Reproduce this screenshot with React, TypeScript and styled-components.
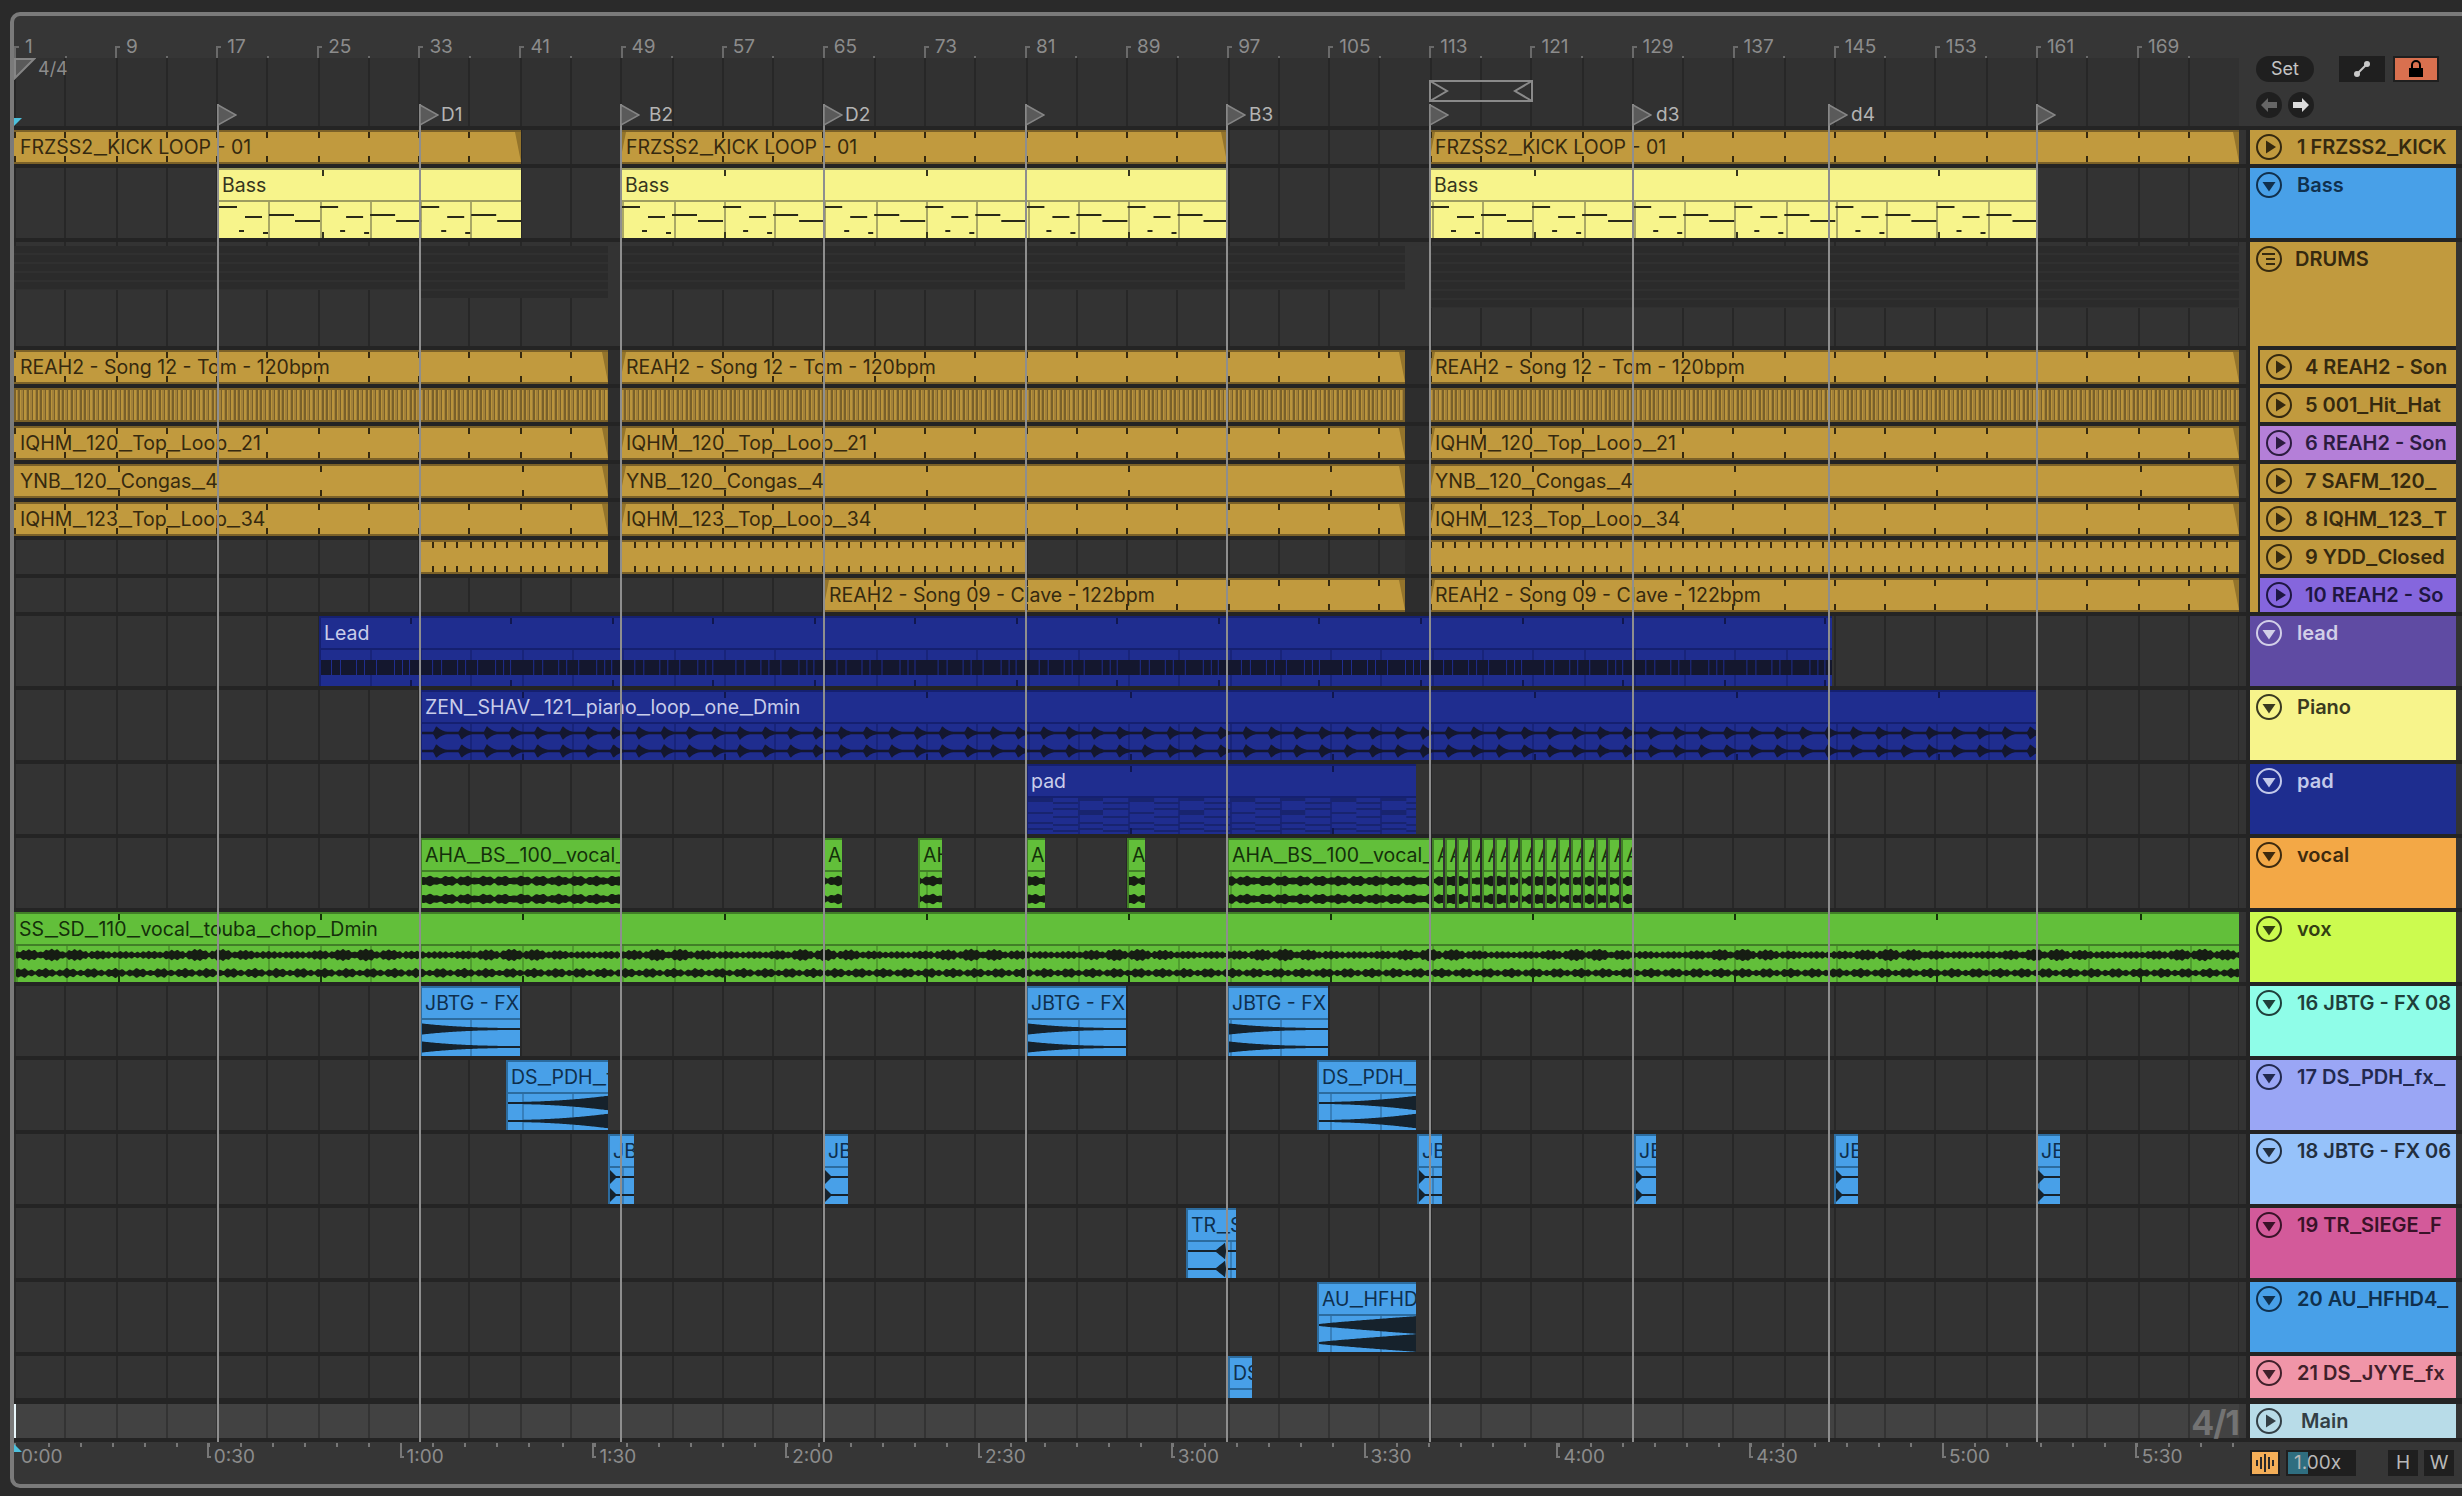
import React from 'react';
import styled, { createGlobalStyle } from 'styled-components';

const ORIGIN = 14;
const BEAT = 50.55;
const LANE_WIDTH = 2225;

type Tone = 'gold' | 'yellow' | 'navy' | 'green' | 'blue';
type Kind = 'plain' | 'hatch' | 'notes' | 'lead' | 'pluck' | 'pad' | 'vocal' | 'vox' | 'decay' | 'swell' | 'hit' | 'rise' | 'big';

interface ClipData {
  x: number;
  end: number;
  label?: string;
  tick?: [number, number];
  kind?: Kind;
}

interface LaneData {
  height: number;
  tone: Tone;
  clips: ClipData[];
  dim?: [number, number][];
}

const TONES = {
  gold: { bg: '#c19a3e', edge: '#7b6128', text: '#35290f', tick: '#35290f', sep: '#a5843a', wave: '#7a5f27' },
  yellow: { bg: '#f7f48b', edge: '#9d9c60', text: '#35351e', tick: '#35351e', sep: '#a9a765', wave: '#2a2a18' },
  navy: { bg: '#1f2d8f', edge: '#152070', text: '#c9cdea', tick: '#10174f', sep: '#18247a', wave: '#14172e' },
  green: { bg: '#62bf3a', edge: '#417f27', text: '#14300a', tick: '#14300a', sep: '#4f9c2e', wave: '#161d13' },
  blue: { bg: '#48a0e8', edge: '#2c6c9f', text: '#0e2f4d', tick: '#0e2f4d', sep: '#377fbb', wave: '#16222c' },
};

const snap = (x: number) => 2 * Math.round(x / 2);

// one gradient with hard stops, so fractional spacing does not drift along the long lanes
const hardStops = (positions: number[], color: string, line = 2) => {
  const stops = positions
    .map((p) => `transparent ${p}px, ${color} ${p}px, ${color} ${p + line}px, transparent ${p + line}px`)
    .join(', ');
  return `linear-gradient(90deg, ${stops})`;
};

const steps = (from: number, to: number, period: number, start: number) => {
  const result: number[] = [];
  let k = Math.ceil((from - start) / period);
  while (start + k * period < to) {
    result.push(snap(start + k * period) - from);
    k += 1;
  }
  return result.filter((p) => p >= 0 && p < to - from - 1);
};

const gridLines = steps(ORIGIN, ORIGIN + LANE_WIDTH, BEAT, ORIGIN);
const LANE_GRID = hardStops(gridLines, '#272727');
const MAIN_GRID = hardStops(gridLines, '#333333');
const TIME_TICKS = hardStops(steps(0, 2225, 32.13, 33), '#777777');

const gold = (x: number, end: number, label?: string, tick: [number, number] = [BEAT, ORIGIN]): ClipData => ({ x, end, label, tick });

const triple = (label: string, tick?: [number, number]) => [gold(14, 608, label, tick), gold(620, 1405, label, tick), gold(1429, 2239, label, tick)];

const stutters: ClipData[] = Array.from({ length: 16 }, (_, i) => ({
  x: 1432 + i * 12.6,
  end: 1432 + i * 12.6 + 10.6,
  label: 'A',
  kind: 'vocal' as Kind,
}));

const clip = (x: number, end: number, label: string, kind: Kind, tick?: [number, number]): ClipData => ({ x, end, label, kind, tick });

const LANES_TOP: LaneData[] = [
  { height: 34, tone: 'gold', clips: [gold(14, 521, 'FRZSS2_KICK LOOP - 01'), gold(620, 1227, 'FRZSS2_KICK LOOP - 01'), gold(1429, 2239, 'FRZSS2_KICK LOOP - 01')] },
  {
    height: 70,
    tone: 'yellow',
    clips: [
      clip(217, 521, 'Bass', 'notes', [202.2, 319]),
      clip(620, 1227, 'Bass', 'notes', [202.2, 722]),
      clip(1429, 2037, 'Bass', 'notes', [202.2, 1531]),
    ],
  },
];

const LANES_DRUMS: LaneData[] = [
  { height: 34, tone: 'gold', clips: triple('REAH2 - Song 12 - Tom - 120bpm'), dim: [[608, 620], [1405, 1429]] },
  { height: 34, tone: 'gold', clips: [14, 620, 1429].map((x, i) => ({ x, end: [608, 1405, 2239][i], kind: 'hatch' as Kind })), dim: [[608, 620], [1405, 1429]] },
  { height: 34, tone: 'gold', clips: triple('IQHM_120_Top_Loop_21'), dim: [[608, 620], [1405, 1429]] },
  { height: 34, tone: 'gold', clips: triple('YNB_120_Congas_4', [202.2, 117]), dim: [[608, 620], [1405, 1429]] },
  { height: 34, tone: 'gold', clips: triple('IQHM_123_Top_Loop_34'), dim: [[608, 620], [1405, 1429]] },
  {
    height: 34,
    tone: 'gold',
    clips: [gold(420, 608, undefined, [12.64, ORIGIN]), gold(620, 1026, undefined, [12.64, ORIGIN]), gold(1429, 2239, undefined, [12.64, ORIGIN])],
    dim: [[608, 620], [1405, 1429]],
  },
  { height: 34, tone: 'gold', clips: [gold(823, 1405, 'REAH2 - Song 09 - Clave - 122bpm'), gold(1429, 2239, 'REAH2 - Song 09 - Clave - 122bpm')], dim: [[1405, 1429]] },
];

const LANES_BOTTOM: LaneData[] = [
  { height: 70, tone: 'navy', clips: [clip(319, 1832, 'Lead', 'lead', [101.1, 407])] },
  { height: 70, tone: 'navy', clips: [clip(420, 2037, 'ZEN_SHAV_121_piano_loop_one_Dmin', 'pluck', [202.2, 1127])] },
  { height: 70, tone: 'navy', clips: [clip(1026, 1416, 'pad', 'pad', [202.2, 1127])] },
  {
    height: 70,
    tone: 'green',
    clips: [
      clip(420, 620, 'AHA_BS_100_vocal_', 'vocal'),
      clip(823, 842, 'A', 'vocal'),
      clip(918, 942, 'AHA', 'vocal'),
      clip(1026, 1045, 'A', 'vocal'),
      clip(1127, 1145, 'A', 'vocal'),
      clip(1227, 1429, 'AHA_BS_100_vocal_', 'vocal'),
      ...stutters,
    ],
  },
  { height: 70, tone: 'green', clips: [clip(14, 2239, 'SS_SD_110_vocal_touba_chop_Dmin', 'vox', [202.2, 115])] },
  { height: 70, tone: 'blue', clips: [clip(420, 520, 'JBTG - FX', 'decay'), clip(1026, 1126, 'JBTG - FX', 'decay'), clip(1227, 1328, 'JBTG - FX', 'decay')] },
  { height: 70, tone: 'blue', clips: [clip(506, 608, 'DS_PDH_fx', 'swell'), clip(1317, 1416, 'DS_PDH_fx', 'swell')] },
  {
    height: 70,
    tone: 'blue',
    clips: [
      clip(608, 634, 'JBTG', 'hit'),
      clip(823, 848, 'JBTG', 'hit'),
      clip(1417, 1442, 'JBTG', 'hit'),
      clip(1634, 1656, 'JBTG', 'hit'),
      clip(1834, 1858, 'JBTG', 'hit'),
      clip(2036, 2060, 'JBTG', 'hit'),
    ],
  },
  { height: 70, tone: 'blue', clips: [clip(1186, 1236, 'TR_SIEGE', 'rise')] },
  { height: 70, tone: 'blue', clips: [clip(1317, 1416, 'AU_HFHD4', 'big')] },
  { height: 42, tone: 'blue', clips: [clip(1228, 1252, 'DS_JYYE', 'plain')] },
];

const LOCATORS: { x: number; label?: string; offset?: number }[] = [
  { x: 218 },
  { x: 420, label: 'D1', offset: 22 },
  { x: 621, label: 'B2', offset: 29 },
  { x: 824, label: 'D2', offset: 22 },
  { x: 1026 },
  { x: 1227, label: 'B3', offset: 23 },
  { x: 1430 },
  { x: 1633, label: 'd3', offset: 24 },
  { x: 1829, label: 'd4', offset: 23 },
  { x: 2037 },
];

const BAR_NUMBERS = Array.from({ length: 22 }, (_, i) => i * 8 + 1);
const TIMES = ['0:00', '0:30', '1:00', '1:30', '2:00', '2:30', '3:00', '3:30', '4:00', '4:30', '5:00', '5:30'];

type IconName = 'play' | 'down' | 'group';

interface TrackData {
  label: string;
  bg: string;
  fg: string;
  icon: IconName;
  height: number;
}

const DK = '#35290f';

const TRACKS_TOP: TrackData[] = [
  { label: '1 FRZSS2_KICK', bg: '#c19a3e', fg: DK, icon: 'play', height: 34 },
  { label: 'Bass', bg: '#48a0e8', fg: '#10304d', icon: 'down', height: 70 },
];

const TRACKS_NESTED: TrackData[] = [
  { label: '4 REAH2 - Son', bg: '#c19a3e', fg: DK, icon: 'play', height: 34 },
  { label: '5 001_Hit_Hat', bg: '#c19a3e', fg: DK, icon: 'play', height: 34 },
  { label: '6 REAH2 - Son', bg: '#b47fd8', fg: '#2c1c40', icon: 'play', height: 34 },
  { label: '7 SAFM_120_', bg: '#c19a3e', fg: DK, icon: 'play', height: 34 },
  { label: '8 IQHM_123_T', bg: '#c19a3e', fg: DK, icon: 'play', height: 34 },
  { label: '9 YDD_Closed', bg: '#c19a3e', fg: DK, icon: 'play', height: 34 },
  { label: '10 REAH2 - So', bg: '#8566dd', fg: '#1e1642', icon: 'play', height: 34 },
];

const TRACKS_BOTTOM: TrackData[] = [
  { label: 'lead', bg: '#5f4ba3', fg: '#d2cfe8', icon: 'down', height: 70 },
  { label: 'Piano', bg: '#f7f48b', fg: '#3a3a20', icon: 'down', height: 70 },
  { label: 'pad', bg: '#1e2d8f', fg: '#c3c9ea', icon: 'down', height: 70 },
  { label: 'vocal', bg: '#f3a846', fg: '#3e2a0e', icon: 'down', height: 70 },
  { label: 'vox', bg: '#ccfb4f', fg: '#333f12', icon: 'down', height: 70 },
  { label: '16 JBTG - FX 08', bg: '#8ffde8', fg: '#1f3f3a', icon: 'down', height: 70 },
  { label: '17 DS_PDH_fx_', bg: '#9aa6f5', fg: '#22294f', icon: 'down', height: 70 },
  { label: '18 JBTG - FX 06', bg: '#96c2fa', fg: '#232f3f', icon: 'down', height: 70 },
  { label: '19 TR_SIEGE_F', bg: '#d35a9a', fg: '#391228', icon: 'down', height: 70 },
  { label: '20 AU_HFHD4_', bg: '#48a0e8', fg: '#10304d', icon: 'down', height: 70 },
  { label: '21 DS_JYYE_fx', bg: '#f095a8', fg: '#40202a', icon: 'down', height: 42 },
];

const GlobalStyle = createGlobalStyle`
  html, body {
    background: #2a2a2a;
    margin: 0;
    overflow: hidden;
  }
`;

const Page = styled.div`
  background: #2a2a2a;
  box-sizing: border-box;
  color: #8c8c8c;
  font-family: Inter, 'Liberation Sans', sans-serif;
  height: 1496px;
  overflow: hidden;
  padding: 12px 0 0 10px;
  width: 2462px;
`;

const Frame = styled.div`
  background: #363636;
  border: 4px solid #7a7a7a;
  border-radius: 10px 0 0 10px;
  border-right: 0;
  box-sizing: border-box;
  display: grid;
  grid-template-columns: 2232px 216px;
  height: 1476px;
  overflow: hidden;
`;

const Timeline = styled.div`
  display: flex;
  flex-direction: column;
  position: relative;
`;

const TopRuler = styled.div`
  display: flex;
  flex: none;
  height: 42px;
  width: 2226px;
`;

const BarCell = styled.div`
  box-sizing: border-box;
  flex: none;
  font-size: 19px;
  line-height: 22px;
  padding: 20px 0 0 11px;
  position: relative;
  width: 101.1px;

  &::before {
    border-left: 2px solid #6a6a6a;
    border-top: 2px solid #6a6a6a;
    bottom: 0;
    content: '';
    height: 10px;
    left: 0;
    position: absolute;
    width: 3px;
  }

  &::after {
    background: #6a6a6a;
    bottom: 0;
    content: '';
    height: 2px;
    left: 50%;
    position: absolute;
    width: 2px;
  }
`;

const MarkerLane = styled.div`
  background-color: #313131;
  background-image: ${LANE_GRID};
  flex: none;
  height: 68px;
  margin-right: 7px;
  position: relative;
`;

const Signature = styled.span`
  font-size: 18px;
  left: 24px;
  line-height: 22px;
  position: absolute;
  top: 0;
`;

const SignatureFlag = styled.svg`
  left: 0;
  position: absolute;
  top: 0;
`;

const LoopBrace = styled.svg`
  left: 1415px;
  position: absolute;
  top: 22px;
`;

const StartMark = styled.div`
  background: #4cc0dc;
  clip-path: polygon(0 0, 100% 0, 0 100%);
  height: 8px;
  left: 0;
  position: absolute;
  top: 60px;
  width: 8px;
`;

const LaneStack = styled.div`
  background: #242424;
  display: flex;
  flex: 1;
  flex-direction: column;
  gap: 4px;
  padding: 4px 0;
`;

const LaneRow = styled.div<{ $height: number }>`
  background-color: #333333;
  background-image: ${LANE_GRID};
  border-right: 7px solid #333333;
  box-shadow: inset -1px 0 0 #272727;
  flex: none;
  height: ${(p) => p.$height}px;
  position: relative;
`;

const DimBand = styled.div`
  background: #2d2d2d;
  bottom: 0;
  position: absolute;
  top: 0;
`;

const GhostBand = styled.div<{ $height: number }>`
  background: repeating-linear-gradient(180deg, #2b2b2b 0 7px, #303030 7px 9px);
  height: ${(p) => p.$height}px;
  position: absolute;
  top: 4px;
`;

const ClipBox = styled.div<{ $tone: Tone; $short: boolean; $ticks: boolean }>`
  background: ${(p) => TONES[p.$tone].bg};
  border-left: ${(p) => (p.$short ? 0 : 2)}px solid ${(p) => TONES[p.$tone].edge};
  border-bottom: ${(p) => (p.$short ? 2 : 0)}px solid ${(p) => TONES[p.$tone].edge};
  border-top: 2px solid ${(p) => TONES[p.$tone].edge};
  bottom: 0;
  box-sizing: border-box;
  color: ${(p) => TONES[p.$tone].text};
  display: flex;
  flex-direction: column;
  overflow: hidden;
  position: absolute;
  top: 0;

  &::before {
    background: ${(p) => (p.$ticks ? 'var(--ticks) left top/100% 6px no-repeat, var(--ticks) left bottom/100% 6px no-repeat' : 'none')};
    content: '';
    inset: 0;
    pointer-events: none;
    position: absolute;
    z-index: 2;
  }
`;

const ClipTitle = styled.div<{ $tone: Tone; $short: boolean }>`
  --under-margin: 2.5px;
  --under-scale: 1.5;
  align-items: center;
  border-bottom: ${(p) => (p.$short ? 0 : 2)}px solid ${(p) => TONES[p.$tone].edge};
  box-sizing: border-box;
  display: flex;
  flex: none;
  font-size: 19.5px;
  height: ${(p) => (p.$short ? '100%' : '32px')};
  padding-left: ${(p) => (p.$short ? 6 : 3)}px;
  white-space: pre;
`;

const Under = styled.span`
  display: inline-block;
  margin: 0 var(--under-margin);
  transform: scaleX(var(--under-scale));
`;

const ClipBody = styled.div`
  background-image: var(--seps);
  background-repeat: no-repeat;
  flex: 1;
  min-height: 0;
  position: relative;
`;

const HatchBody = styled.div`
  background: repeating-linear-gradient(90deg, #79602a 0 1.6px, #ba943c 1.6px 3px, #a3813a 3px 4.4px);
  flex: 1;
`;

const Fade = styled.div<{ $side: 'left' | 'right' }>`
  background: rgba(80, 60, 15, 0.4);
  clip-path: ${(p) => (p.$side === 'right' ? 'polygon(0 0, 100% 0, 100% 100%)' : 'polygon(0 0, 100% 0, 0 100%)')};
  bottom: 0;
  ${(p) => p.$side}: 0;
  position: absolute;
  top: 0;
  width: 6px;
`;

const MainLane = styled.div`
  background-color: #424242;
  background-image: ${MAIN_GRID};
  border-right: 7px solid #3a3a3a;
  flex: none;
  height: 34px;
  margin-top: 2px;
  position: relative;

  &::before {
    background: #e8f6fa;
    bottom: 0;
    content: '';
    left: 0;
    position: absolute;
    top: 0;
    width: 2px;
  }
`;

const GridValue = styled.span`
  color: #737373;
  font-size: 34px;
  font-weight: 700;
  letter-spacing: -1px;
  line-height: 34px;
  position: absolute;
  right: 0;
  top: 2px;
`;

const TimeRuler = styled.div`
  background-image: ${TIME_TICKS};
  background-position: left 1px;
  background-repeat: no-repeat;
  background-size: 100% 4px;
  display: flex;
  flex: none;
  height: 42px;
  position: relative;
`;

const TimeCell = styled.div<{ $first: boolean }>`
  box-sizing: border-box;
  flex: none;
  font-size: 19px;
  line-height: 30px;
  padding-left: 7px;
  position: relative;
  width: 192.8px;

  &::before {
    border-bottom: 2px solid #777777;
    border-left: 2px solid #777777;
    content: '';
    display: ${(p) => (p.$first ? 'none' : 'block')};
    height: 13px;
    left: 0;
    position: absolute;
    top: 1px;
    width: 2px;
  }
`;

const StartFlag = styled.div`
  background: #4cc0dc;
  clip-path: polygon(0 0, 100% 100%, 0 100%);
  height: 8px;
  left: 0;
  position: absolute;
  top: 2px;
  width: 8px;
`;

const Locator = styled.div`
  background: #8e8e8e;
  bottom: 42px;
  pointer-events: none;
  position: absolute;
  top: 88px;
  width: 2px;
  z-index: 5;
`;

const LocatorFlag = styled.svg`
  left: 0;
  position: absolute;
  top: 0;
`;

const LocatorLabel = styled.span`
  color: #b4b4b4;
  font-size: 19px;
  left: var(--offset);
  line-height: 22px;
  position: absolute;
  top: 0;
`;

const Panel = styled.div`
  display: flex;
  flex-direction: column;
`;

const PanelTop = styled.div`
  box-sizing: border-box;
  display: flex;
  flex: none;
  flex-direction: column;
  gap: 10px;
  height: 110px;
  padding: 40px 0 0 10px;
`;

const ControlRow = styled.div`
  display: flex;
  gap: 6px;
`;

const SetButton = styled.div`
  background: #1f1f1f;
  border-radius: 13px;
  color: #c4c4c4;
  font-size: 18px;
  height: 26px;
  line-height: 26px;
  margin-right: 17px;
  text-align: center;
  width: 58px;
`;

const SquareButton = styled.div<{ $bg?: string }>`
  align-items: center;
  background: ${(p) => p.$bg || '#1f1f1f'};
  border: 2px solid #1f1f1f;
  box-sizing: border-box;
  display: flex;
  height: 26px;
  justify-content: center;
  margin-left: 2px;
  width: 46px;
`;

const RoundButton = styled.div`
  align-items: center;
  background: #1f1f1f;
  border-radius: 50%;
  display: flex;
  height: 26px;
  justify-content: center;
  width: 26px;
`;

const TrackStack = styled.div`
  background: #242424;
  display: flex;
  flex: 1;
  flex-direction: column;
  gap: 4px;
  padding: 4px 0;
`;

const TrackSlot = styled.div<{ $offset?: number }>`
  background: #333333;
  margin-left: 4px;
  margin-top: ${(p) => p.$offset || 0}px;
  padding-right: 6px;
`;

const Group = styled.div`
  background: #c19a3e;
  display: flex;
  flex-direction: column;
`;

const NestedList = styled.div`
  background: #242424;
  display: flex;
  flex-direction: column;
  gap: 4px;
  margin-left: 8px;
  padding: 4px 0 0 2px;
`;

const TrackHeader = styled.div<{ $bg: string; $fg: string; $height: number; $gap: number }>`
  --under-margin: 1px;
  --under-scale: 1.2;
  align-items: flex-start;
  background: ${(p) => p.$bg};
  box-sizing: border-box;
  color: ${(p) => p.$fg};
  display: flex;
  font-size: 20px;
  font-weight: 600;
  gap: ${(p) => p.$gap}px;
  height: ${(p) => p.$height}px;
  line-height: 26px;
  overflow: hidden;
  padding: 4px 0 0 6px;
  white-space: pre;
`;

const PanelBottom = styled.div`
  box-sizing: border-box;
  display: flex;
  flex: none;
  gap: 6px;
  height: 42px;
  padding: 8px 0 0 4px;
`;

const WaveButton = styled.div`
  align-items: center;
  background: #f3ae58;
  border: 2px solid #1f1f1f;
  box-sizing: border-box;
  display: flex;
  height: 26px;
  justify-content: center;
  width: 30px;
`;

const TempoBox = styled.div`
  background: linear-gradient(90deg, #2f6e80 20px, #1f1f1f 20px);
  background-clip: padding-box;
  border: 2px solid #1f1f1f;
  box-sizing: border-box;
  color: #b8b8b8;
  font-size: 19px;
  height: 26px;
  line-height: 22px;
  margin-right: 26px;
  padding-left: 6px;
  width: 70px;
`;

const KeyButton = styled.div`
  background: #1f1f1f;
  color: #b8b8b8;
  font-size: 19px;
  height: 26px;
  line-height: 26px;
  text-align: center;
  width: 30px;
`;

// the original UI face draws its underscores wider than Inter does
const Spaced: React.FC<{ text: string }> = ({ text }) => (
  <span>
    {text.split('_').map((part, i) => (
      <React.Fragment key={i}>
        {i > 0 && <Under>_</Under>}
        {part}
      </React.Fragment>
    ))}
  </span>
);

const TrackIcon: React.FC<{ name: IconName }> = ({ name }) => (
  <svg width="26" height="26" viewBox="0 0 26 26" style={{ flex: 'none' }}>
    <circle cx="13" cy="13" r="12" fill="none" stroke="currentColor" strokeWidth="2" />
    {name === 'play' && <polygon points="10,6.5 10,19.5 20,13" fill="currentColor" />}
    {name === 'down' && <polygon points="6.5,10 19.5,10 13,19.5" fill="currentColor" />}
    {name === 'group' && (
      <g stroke="currentColor" strokeWidth="2">
        <line x1="6" y1="8" x2="19" y2="8" />
        <line x1="10" y1="13" x2="19" y2="13" />
        <line x1="10" y1="18" x2="19" y2="18" />
      </g>
    )}
  </svg>
);

const channelPath = (width: number, mid: number, env: (x: number) => number) => {
  const upper: string[] = [];
  const lower: string[] = [];
  for (let x = 0; x <= width; x += 1) {
    const e = env(x);
    upper.push(`${x} ${(mid - e).toFixed(1)}`);
    lower.unshift(`${x} ${(mid + e).toFixed(1)}`);
  }
  return `M${upper.join('L')}L${lower.join('L')}Z`;
};

const NOTES: [number, number, number][] = [
  [0, 18, 4],
  [26, 43, 14],
  [50, 75, 12],
  [76, 101, 18],
  [20, 25, 28],
  [44, 49, 30],
];

const PAD_LINES: [number, number, number, number][] = [
  [0, 25, 0, 4],
  [0, 25, 14, 2],
  [0, 25, 24, 2],
  [0, 25, 30, 2],
  [25, 50, 4, 2],
  [25, 50, 10, 2],
  [25, 50, 18, 2],
  [25, 50, 26, 2],
  [25, 50, 32, 2],
  [50, 75, 0, 3],
  [50, 75, 12, 5],
  [50, 75, 24, 2],
  [50, 75, 30, 2],
  [75, 101, 4, 2],
  [75, 101, 10, 2],
  [75, 101, 18, 2],
  [75, 101, 26, 2],
  [75, 101, 32, 2],
];

const LEAD_GAPS = [10, 19, 35, 43, 55, 73, 81, 88];

const pluck = (x: number) => {
  const t = (x + 14) % 25.3;
  return t < 3 ? 1 + t * 2 : Math.max(1.2, 7 * Math.exp(-(t - 3) / 6));
};

const vocalEnv = (seed: number) => (x: number) =>
  2.6 + 2 * Math.abs(Math.sin((x + seed) * 0.17)) + 0.7 * Math.sin((x + seed) * 0.83);

const voxTop = (x: number) => 2.5 + 3 * Math.abs(Math.sin(x * 0.13)) * (0.6 + 0.4 * Math.sin(x * 0.041)) + 0.8 * Math.sin(x * 1.1);
const voxBottom = (x: number) => 3.2 + 0.9 * Math.sin(x * 0.9) + 0.9 * Math.sin(x * 0.27);

const WaveArt: React.FC<{ kind: Kind; width: number; x: number; color: string }> = ({ kind, width, x, color }) => {
  const w = Math.ceil(width);
  const count = Math.ceil(w / 101.1);
  const loops = Array.from({ length: count }, (_, i) => i * 101.1);
  let content: React.ReactNode = null;

  if (kind === 'notes') {
    content = loops.map((o) =>
      NOTES.map(([a, b, y]) => <rect key={`${o}-${a}`} x={o + a} y={y} width={b - a} height={2} fill={color} />),
    );
  } else if (kind === 'pad') {
    content = loops.map((o) =>
      PAD_LINES.map(([a, b, y, h]) => <rect key={`${o}-${a}-${y}`} x={o + a} y={y} width={b - a} height={h} fill="#18246f" />),
    );
  } else if (kind === 'lead') {
    content = (
      <>
        <rect x={0} y={10} width={w} height={15} fill={color} />
        {loops.map((o) => LEAD_GAPS.map((g) => <rect key={`${o}-${g}`} x={o + g} y={10} width={1} height={15} fill="#1f2d8f" />))}
      </>
    );
  } else {
    let top: (p: number) => number = () => 0;
    let bottom = top;
    if (kind === 'pluck') {
      top = pluck;
      bottom = pluck;
    } else if (kind === 'vocal') {
      top = vocalEnv(x * 0.4);
      bottom = vocalEnv(x * 0.4);
    } else if (kind === 'vox') {
      top = voxTop;
      bottom = voxBottom;
    } else if (kind === 'decay') {
      top = (p) => 1 + 4.5 * Math.pow(1 - p / w, 2.4);
      bottom = top;
    } else if (kind === 'swell') {
      top = (p) => 1 + 6.5 * Math.pow(p / w, 2);
      bottom = top;
    } else if (kind === 'big') {
      top = (p) => 1 + 8 * Math.pow(p / w, 0.9);
      bottom = top;
    } else if (kind === 'hit') {
      top = (p) => (p < 6 ? 7 - p : 1);
      bottom = top;
    } else if (kind === 'rise') {
      top = (p) => (p < 28 ? 1 : p < 38 ? 1 + ((p - 28) / 10) * 8 : 1);
      bottom = top;
    }
    if (kind === 'plain') return null;
    content = <path d={`${channelPath(w, 9, top)}${channelPath(w, 27, bottom)}`} fill={color} />;
  }

  return (
    <svg width={w} height={36} style={{ display: 'block', position: 'relative' }}>
      {content}
    </svg>
  );
};

const Clip: React.FC<{ data: ClipData; tone: Tone }> = ({ data, tone }) => {
  const width = data.end - data.x;
  const kind = data.kind;
  const short = !kind || kind === 'hatch';
  const colors = TONES[tone];
  const vars: Record<string, string> = {
    left: `${data.x - ORIGIN}px`,
    width: `${width}px`,
  };
  if (data.tick) {
    vars['--ticks'] = hardStops(steps(data.x, data.end, data.tick[0], data.tick[1]), colors.tick);
  }
  if (kind && kind !== 'hatch') {
    vars['--seps'] = hardStops(steps(data.x, data.end, BEAT, ORIGIN), colors.sep);
  }
  return (
    <ClipBox $tone={tone} $short={short} $ticks={Boolean(data.tick)} style={vars as React.CSSProperties}>
      {kind === 'hatch' && <HatchBody />}
      {data.label && (
        <ClipTitle $tone={tone} $short={short}>
          <Spaced text={data.label} />
        </ClipTitle>
      )}
      {kind && kind !== 'hatch' && (
        <ClipBody>
          <WaveArt kind={kind} width={width} x={data.x} color={colors.wave} />
        </ClipBody>
      )}
      {short && kind !== 'hatch' && data.label && (
        <>
          <Fade $side="right" />
          {data.x > 14 && <Fade $side="left" />}
        </>
      )}
    </ClipBox>
  );
};

const Lane: React.FC<{ lane: LaneData }> = ({ lane }) => (
  <LaneRow $height={lane.height}>
    {lane.dim?.map(([a, b]) => (
      <DimBand key={a} style={{ left: a - ORIGIN, width: b - a }} />
    ))}
    {lane.clips.map((c) => (
      <Clip key={c.x} data={c} tone={lane.tone} />
    ))}
  </LaneRow>
);

const Track: React.FC<{ track: TrackData; nested?: boolean }> = ({ track, nested }) => (
  <TrackHeader $bg={track.bg} $fg={track.fg} $height={track.height} $gap={nested ? 13 : 15}>
    <TrackIcon name={track.icon} />
    <Spaced text={track.label} />
  </TrackHeader>
);

const App: React.FC = () => (
  <Page>
    <GlobalStyle />
    <Frame>
      <Timeline>
        <TopRuler>
          {BAR_NUMBERS.map((n) => (
            <BarCell key={n}>{n}</BarCell>
          ))}
        </TopRuler>
        <MarkerLane>
          <SignatureFlag width="22" height="22">
            <polygon points="1,1 20,1 1,20" fill="#5a5a5a" stroke="#858585" strokeWidth="2" />
          </SignatureFlag>
          <Signature>4/4</Signature>
          <LoopBrace width="104" height="24">
            <rect x="1" y="1" width="102" height="20" fill="none" stroke="#8a8a8a" strokeWidth="2" />
            <polyline points="1,1 18,11 1,21" fill="none" stroke="#8a8a8a" strokeWidth="2" />
            <polyline points="103,1 86,11 103,21" fill="none" stroke="#8a8a8a" strokeWidth="2" />
          </LoopBrace>
          <StartMark />
        </MarkerLane>
        <LaneStack>
          {LANES_TOP.map((lane, i) => (
            <Lane key={i} lane={lane} />
          ))}
          <LaneRow $height={104}>
            <GhostBand $height={44} style={{ left: 0, width: 594 }} />
            <GhostBand $height={52} style={{ left: 406, width: 188 }} />
            <GhostBand $height={44} style={{ left: 606, width: 785 }} />
            <GhostBand $height={62} style={{ left: 1415, width: 810 }} />
          </LaneRow>
          {LANES_DRUMS.map((lane, i) => (
            <Lane key={i} lane={lane} />
          ))}
          {LANES_BOTTOM.map((lane, i) => (
            <Lane key={i} lane={lane} />
          ))}
          <MainLane>
            <GridValue>4/1</GridValue>
          </MainLane>
        </LaneStack>
        <TimeRuler>
          <StartFlag />
          {TIMES.map((t, i) => (
            <TimeCell key={t} $first={i === 0}>
              {t}
            </TimeCell>
          ))}
        </TimeRuler>
        {LOCATORS.map((l) => (
          <Locator key={l.x} style={{ left: l.x - ORIGIN - 1 }}>
            <LocatorFlag width="20" height="22">
              <polygon points="1,1 19,11 1,21" fill="#5a5a5a" stroke="#858585" strokeWidth="1.5" />
            </LocatorFlag>
            {l.label && <LocatorLabel style={{ '--offset': `${l.offset}px` } as React.CSSProperties}>{l.label}</LocatorLabel>}
          </Locator>
        ))}
      </Timeline>
      <Panel>
        <PanelTop>
          <ControlRow>
            <SetButton>Set</SetButton>
            <SquareButton>
              <svg width="18" height="18" viewBox="0 0 18 18">
                <line x1="4" y1="14" x2="14" y2="4" stroke="#c8c8c8" strokeWidth="2" />
                <circle cx="4" cy="14" r="3" fill="#c8c8c8" />
                <circle cx="14" cy="4" r="3" fill="#c8c8c8" />
              </svg>
            </SquareButton>
            <SquareButton $bg="#d9704f">
              <svg width="16" height="18" viewBox="0 0 16 18">
                <path d="M4 8V5a4 4 0 0 1 8 0v3" fill="none" stroke="#000" strokeWidth="2" />
                <rect x="1" y="8" width="14" height="9" fill="#000" />
              </svg>
            </SquareButton>
          </ControlRow>
          <ControlRow>
            <RoundButton>
              <svg width="16" height="14" viewBox="0 0 16 14">
                <path d="M0 7 7 0v4h9v6H7v4z" fill="#666666" />
              </svg>
            </RoundButton>
            <RoundButton>
              <svg width="16" height="14" viewBox="0 0 16 14">
                <path d="M16 7 9 0v4H0v6h9v4z" fill="#dcdcdc" />
              </svg>
            </RoundButton>
          </ControlRow>
        </PanelTop>
        <TrackStack>
          {TRACKS_TOP.map((t) => (
            <TrackSlot key={t.label}>
              <Track track={t} />
            </TrackSlot>
          ))}
          <TrackSlot>
            <Group>
              <TrackHeader $bg="#c19a3e" $fg={DK} $height={104} $gap={13}>
                <TrackIcon name="group" />
                DRUMS
              </TrackHeader>
              <NestedList>
                {TRACKS_NESTED.map((t) => (
                  <Track key={t.label} track={t} nested />
                ))}
              </NestedList>
            </Group>
          </TrackSlot>
          {TRACKS_BOTTOM.map((t) => (
            <TrackSlot key={t.label}>
              <Track track={t} />
            </TrackSlot>
          ))}
          <TrackSlot $offset={2}>
            <TrackHeader $bg="#b8dce8" $fg="#333f45" $height={34} $gap={19}>
              <TrackIcon name="play" />
              Main
            </TrackHeader>
          </TrackSlot>
        </TrackStack>
        <PanelBottom>
          <WaveButton>
            <svg width="20" height="18" viewBox="0 0 20 18">
              <g stroke="#2a2a2a" strokeWidth="2">
                <line x1="2" y1="6" x2="2" y2="12" />
                <line x1="6" y1="3" x2="6" y2="15" />
                <line x1="10" y1="0" x2="10" y2="18" />
                <line x1="14" y1="3" x2="14" y2="15" />
                <line x1="18" y1="6" x2="18" y2="12" />
              </g>
            </svg>
          </WaveButton>
          <TempoBox>1.00x</TempoBox>
          <KeyButton>H</KeyButton>
          <KeyButton>W</KeyButton>
        </PanelBottom>
      </Panel>
    </Frame>
  </Page>
);

export default App;
